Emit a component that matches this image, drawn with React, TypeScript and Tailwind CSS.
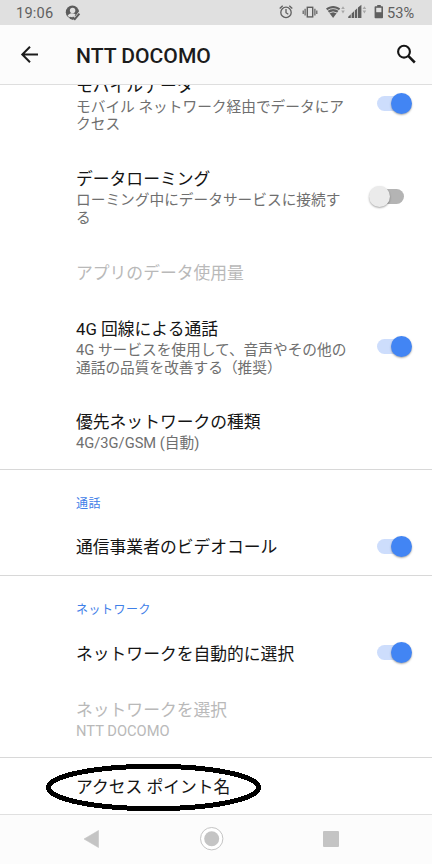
import type { ReactNode } from "react"
import clsx from "clsx"

interface SwitchProps {
  checked: boolean
  className?: string
}

function Switch({ checked, className }: SwitchProps) {
  return (
    <span
      role="switch"
      aria-checked={checked}
      className={clsx("flex h-[21px] w-[35px] shrink-0 items-center", !checked && "mr-2", className)}
    >
      <span className={clsx("h-[15px] w-[27px] shrink-0 rounded-full", checked ? "bg-[#cdddfc]" : "ml-2 bg-[#b4b4b4]")} />
      <span
        className={clsx(
          "size-[21px] shrink-0 rounded-full shadow-[0_1px_2px_rgba(0,0,0,0.35)]",
          checked ? "-ml-[13.5px] bg-[#4285f4]" : "-ml-[35px] bg-[#ebebeb]",
        )}
      />
    </span>
  )
}

interface RowProps {
  title: string
  summary?: ReactNode
  checked?: boolean
  disabled?: boolean
  className?: string
}

function Row({ title, summary, checked, disabled = false, className }: RowProps) {
  return (
    <div className={clsx("flex shrink-0 items-center justify-between pl-[76px] pr-5", className)}>
      <div>
        <div
          className={clsx(
            "whitespace-nowrap text-[16.8px] leading-6",
            summary ? "pb-px" : "pt-[2px]",
            disabled ? "text-[#b9b9b9]" : "text-[#141414]",
          )}
        >
          {title}
        </div>
        {summary && (
          <div className={clsx("whitespace-nowrap text-[14.7px] leading-[17.5px]", disabled ? "text-[#b9b9b9]" : "text-[#6f6f6f]")}>
            {summary}
          </div>
        )}
      </div>
      {checked !== undefined && <Switch checked={checked} className={summary ? "mb-px" : undefined} />}
    </div>
  )
}

function SectionLabel({ children }: { children: ReactNode }) {
  return (
    <div className="h-[48.5px] shrink-0 border-t border-[#d8d8d8] pl-[76px] pt-6 text-[12px] leading-5 tracking-[0.5px] text-[#3f80e8]">
      {children}
    </div>
  )
}

function StatusBar() {
  return (
    <div className="flex h-[25px] shrink-0 items-center bg-[#e0e0e0] pl-4 text-[14.6px] text-[#5f5f5f]">
      <span className="pt-[2px] tracking-[0.2px]">19:06</span>
      <svg className="ml-3 size-4" viewBox="0 0 16 16" fill="none">
        <circle cx="7.4" cy="7.2" r="6.6" fill="#5c5c5c" />
        <circle cx="7.6" cy="5.4" r="2.7" fill="#e0e0e0" />
        <path d="M2.6 10.4c2.4-2.4 5.6-2.6 8-1l-2.2 3.4c-2.4 0-4.6-.6-5.8-2.4Z" fill="#e0e0e0" />
        <path d="m8.4 12.2 2.1 2.1 4.8-6.4" stroke="#e0e0e0" strokeWidth="4" />
        <path d="m7.4 12.2 2.4 1.9 4.6-5.4M5 12.8l3.4 1.2" stroke="#5c5c5c" strokeWidth="2" />
      </svg>

      <svg className="ml-auto h-[25px] w-[106px]" viewBox="0 0 106 25" fill="none" stroke="#5f5f5f">
        <circle cx="8" cy="12.4" r="5.2" strokeWidth="1.3" />
        <path d="M8 9v3.7l2.3 1.5M1.7 8.5l3-2.7M14.3 8.5l-3-2.7" strokeWidth="1.3" />
        <rect x="29.3" y="7.3" width="5.4" height="9.6" strokeWidth="1.4" />
        <path d="M27.1 8.8v6.6M36.9 8.8v6.6M25.2 10.4v3.6M38.8 10.4v3.6" strokeWidth="1.2" />
        <g stroke="none" fill="#5f5f5f">
          <path d="M48 8.6c4.2-3.5 10-3.5 14.2 0l-7.1 9.4Z" />
          <path
            d="m63.2 9 1.8-2.8L66.8 9ZM63.2 10.6l1.8 2.8 1.8-2.8ZM84.6 9l1.8-2.8L88.2 9ZM84.6 10.6l1.8 2.8 1.8-2.8Z"
            fill="#a8a8a8"
          />
          <path d="M70.2 18v-1.2l2.6-2.5V18ZM73.6 18v-4.4l2.4-2.3V18ZM76.8 18v-7.4l2.4-2.3V18ZM80 18V7.6l3.4-2.8V18Z" />
          <path d="M97.4 6.2h1.8V5h3.6v1.2h1.4c.5 0 .8.3.8.8v10.4c0 .5-.3.8-.8.8h-6.8c-.5 0-.8-.3-.8-.8V7c0-.5.3-.8.8-.8Z" />
          <path d="M98.2 7.8h5.2v4.4h-5.2Z" fill="#e0e0e0" />
        </g>
        <path d="M49.2 10.6q5.9-4 11.8 0M51.2 13q3.9-2.4 7.8 0" stroke="#e0e0e0" strokeWidth="0.9" />
      </svg>
      <span className="w-[48px] pl-[3px] pt-[2px]">53%</span>
    </div>
  )
}

function AppBar() {
  return (
    <header className="flex h-[59.5px] shrink-0 items-center border-b border-[#dedede] bg-[#fcfcfc]">
      <svg className="ml-5 size-[19px]" viewBox="0 0 19 19" fill="none" stroke="#1c1c1c" strokeWidth="2">
        <path d="M18 9.5H2.5M10 1.8 2.3 9.5 10 17.2" />
      </svg>
      <h1 className="ml-[37px] pt-[3px] text-[21.1px] font-medium leading-6 text-[#1c1c1c]">NTT DOCOMO</h1>
      <svg className="ml-auto mr-4 size-5" viewBox="0 0 20 20" fill="none" stroke="#151515">
        <circle cx="8" cy="7.7" r="5.9" strokeWidth="2.1" />
        <path d="m12.2 11.9 6.6 6.6" strokeWidth="2.5" />
      </svg>
    </header>
  )
}

function NavBar() {
  return (
    <nav className="flex h-[50px] shrink-0 justify-center border-t border-[#e0e0e0] bg-[#fcfcfc]">
      <svg className="h-[49px] w-[432px]" viewBox="0 0 432 49" fill="#c4c4c4">
        <path d="M84 24 98.5 15.5v17Z" stroke="#c4c4c4" strokeWidth="0.6" strokeLinejoin="round" />
        <circle cx="211.7" cy="23.7" r="11.2" fill="#fff" stroke="#c4c4c4" />
        <circle cx="211.7" cy="23.7" r="7.5" />
        <rect x="323" y="16" width="16" height="16" rx="1" />
      </svg>
    </nav>
  )
}

export default function App() {
  return (
    <div
      lang="ja"
      className="flex h-[864px] w-[432px] flex-col overflow-hidden bg-white font-['Roboto','Noto_Sans_CJK_JP',sans-serif]"
    >
      <StatusBar />
      <AppBar />
      <main className="relative flex min-h-0 flex-1 flex-col overflow-hidden">
        {/* list is scrolled, the first row sits partly under the app bar */}
        <Row
          className="-mt-[27.5px] h-[93.5px]"
          title="モバイルデータ"
          summary={<>モバイル ネットワーク経由でデータにア<br />クセス</>}
          checked
        />
        <Row
          className="h-[93px]"
          title="データローミング"
          summary={<>ローミング中にデータサービスに接続す<br />る</>}
          checked={false}
        />
        <Row className="h-[56.5px]" title="アプリのデータ使用量" disabled />
        <Row
          className="h-[94px]"
          title="4G 回線による通話"
          summary={<>4G サービスを使用して、音声やその他の<br />通話の品質を改善する（推奨）</>}
          checked
        />
        <Row className="h-[75px]" title="優先ネットワークの種類" summary="4G/3G/GSM (自動)" />

        <SectionLabel>通話</SectionLabel>
        <Row className="h-[57.5px]" title="通信事業者のビデオコール" checked />

        <SectionLabel>ネットワーク</SectionLabel>
        <Row className="h-[57px] pt-px" title="ネットワークを自動的に選択" checked />
        <Row className="h-[76px] pt-[2px]" title="ネットワークを選択" summary="NTT DOCOMO" disabled />

        <Row className="h-[57px] border-t border-[#d8d8d8]" title="アクセス ポイント名" />
        <svg
          className="pointer-events-none absolute bottom-[2px] left-[45px]"
          width="217"
          height="49"
          viewBox="0 0 217 49"
          fill="none"
          shapeRendering="crispEdges"
        >
          <ellipse cx="108.5" cy="24.5" rx="105" ry="21.2" stroke="#000" strokeWidth="5" />
        </svg>
      </main>
      <NavBar />
    </div>
  )
}
